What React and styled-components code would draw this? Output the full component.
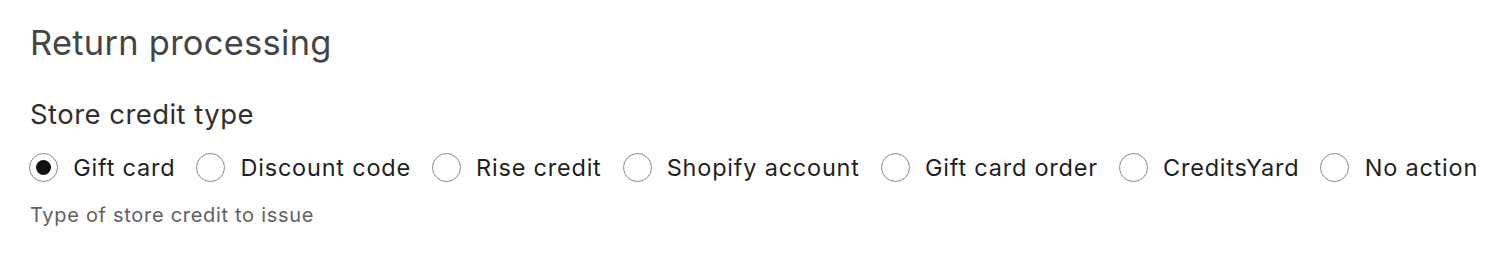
import React, { useState } from "react";
import styled, { createGlobalStyle } from "styled-components";

const GlobalStyle = createGlobalStyle`
  body {
    margin: 0;
    background: #ffffff;
    font-family: Inter, "Liberation Sans", sans-serif;
    -webkit-font-smoothing: antialiased;
  }
`;

const Page = styled.div`
  padding: 21px 0 0 29px;
`;

const Title = styled.h2`
  margin: 0 0 0 1px;
  font-size: 34.4px;
  font-weight: 400;
  line-height: 44px;
  color: #454545;
  letter-spacing: 0.3px;
`;

const Field = styled.fieldset`
  border: 0;
  margin: 0;
  padding: 0;
  margin-top: 32px;
`;

const Legend = styled.legend`
  padding: 0 0 0 1px;
  font-size: 27.5px;
  font-weight: 400;
  line-height: 34px;
  color: #303030;
  letter-spacing: 0.45px;
`;

const Options = styled.div`
  display: flex;
  align-items: center;
  gap: 21px;
  margin-top: 22px;
`;

const Option = styled.label`
  display: flex;
  align-items: center;
  gap: 15.2px;
  flex-shrink: 0;
  white-space: nowrap;
  cursor: pointer;
  font-size: 23.5px;
  line-height: 29px;
  color: #1f1f1f;
  letter-spacing: 0.78px;
`;

const Circle = styled.span`
  box-sizing: border-box;
  width: 29px;
  height: 29px;
  border-radius: 50%;
  border: 1.5px solid #8a8a8a;
  display: flex;
  align-items: center;
  justify-content: center;
  flex-shrink: 0;

  &::after {
    content: "";
    width: 15px;
    height: 15px;
    border-radius: 50%;
    background: #111111;
    display: ${(p) => (p.$checked ? "block" : "none")};
  }
`;

const Hidden = styled.input`
  display: none;
`;

const Help = styled.div`
  margin: 20px 0 0 1px;
  font-size: 20px;
  line-height: 26px;
  color: #616161;
  letter-spacing: 0.7px;
`;

const types = [
  "Gift card",
  "Discount code",
  "Rise credit",
  "Shopify account",
  "Gift card order",
  "CreditsYard",
  "No action",
];

export default function App() {
  const [value, setValue] = useState("Gift card");
  return (
    <>
      <GlobalStyle />
      <Page>
        <Title>Return processing</Title>
        <Field>
          <Legend>Store credit type</Legend>
          <Options>
            {types.map((t) => (
              <Option key={t}>
                <Hidden
                  type="radio"
                  name="credit"
                  checked={value === t}
                  onChange={() => setValue(t)}
                />
                <Circle $checked={value === t} />
                {t}
              </Option>
            ))}
          </Options>
          <Help>Type of store credit to issue</Help>
        </Field>
      </Page>
    </>
  );
}
